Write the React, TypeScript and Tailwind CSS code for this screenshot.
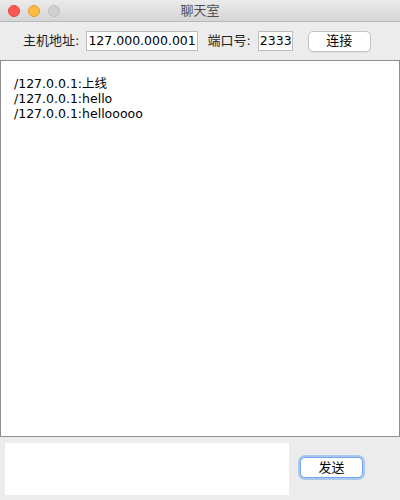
import React from "react";

export default function App() {
  const cjk = { fontFamily: '"DejaVu Sans", "Noto Sans CJK SC", sans-serif' };
  return (
    <div className="w-[400px] h-[500px] flex flex-col bg-[#ececec] overflow-hidden" style={cjk}>
      {/* title bar */}
      <div className="relative h-[22px] shrink-0 flex items-center bg-gradient-to-b from-[#ebebeb] to-[#d5d5d5] border-b border-[#b9b9b9]">
        <div className="flex items-center gap-[8px] pl-[8px]">
          <div className="w-[12px] h-[12px] rounded-full bg-[#fc5753] border border-[#df4744]" />
          <div className="w-[12px] h-[12px] rounded-full bg-[#fdbc40] border border-[#de9f34]" />
          <div className="w-[12px] h-[12px] rounded-full bg-[#d0d0d0] border border-[#bcbcbc]" />
        </div>
        <div className="absolute inset-0 flex items-center justify-center text-[13px] text-[#4d4d4d]">聊天室</div>
      </div>
      {/* toolbar */}
      <div className="h-[38px] shrink-0 flex items-center pl-[23px] text-[13px] text-[#222]">
        <span>主机地址:</span>
        <div className="ml-[7px] w-[112px] h-[20px] bg-white border border-[#bdbdbd] flex items-center pl-[1px] text-[12.5px] text-black whitespace-nowrap overflow-hidden">127.000.000.001</div>
        <span className="ml-[9px]">端口号:</span>
        <div className="ml-[7px] w-[35px] h-[20px] bg-white border border-[#bdbdbd] flex items-center pl-[1px] text-[12.5px] text-black overflow-hidden">2333</div>
        <div className="ml-[15px] w-[63px] h-[21px] bg-white border border-[#c3c3c3] rounded-[5px] flex items-center justify-center text-[13px] text-black shadow-[0_1px_0_rgba(0,0,0,0.05)]">连接</div>
      </div>
      {/* chat area */}
      <div className="h-[377px] shrink-0 bg-white border border-[#8e8e8e] pl-[13px] pt-[15px] text-[12.5px] leading-[15px] text-black">
        <div>/127.0.0.1:上线</div>
        <div>/127.0.0.1:hello</div>
        <div>/127.0.0.1:hellooooo</div>
      </div>
      {/* bottom */}
      <div className="flex-1 flex items-start pt-[6px] pl-[5px]">
        <div className="w-[284px] h-[52px] bg-white" />
        <div className="ml-[11px] mt-[14px] w-[63px] h-[21px] bg-white rounded-[5px] border border-[#6fa8f0] shadow-[0_0_0_2px_rgba(120,170,240,0.55)] flex items-center justify-center text-[13px] text-black">发送</div>
      </div>
    </div>
  );
}
